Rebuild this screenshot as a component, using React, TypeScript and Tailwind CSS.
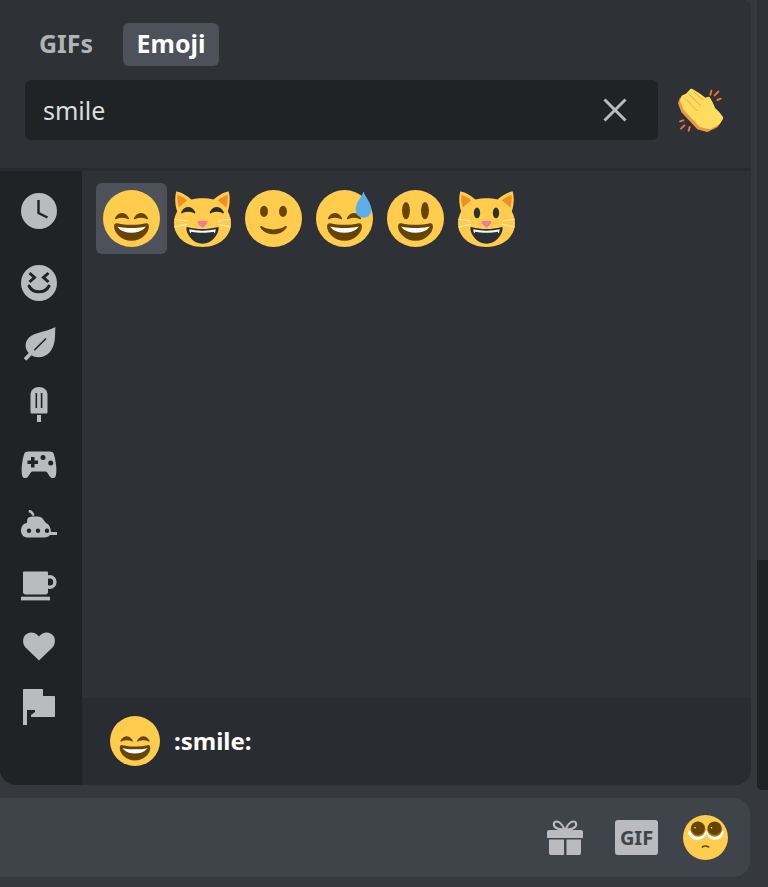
const SMILE_EYES = "M28.457 17.797c-.06-.135-1.499-3.297-4.457-3.297-2.957 0-4.397 3.162-4.457 3.297-.092.207-.032.449.145.591.175.142.426.147.61.014.012-.009 1.262-.902 3.702-.902 2.426 0 3.674.881 3.702.901.088.066.194.099.298.099.11 0 .221-.037.312-.109.177-.142.238-.386.145-.594zm-12 0c-.06-.135-1.499-3.297-4.457-3.297-2.957 0-4.397 3.162-4.457 3.297-.092.207-.032.449.144.591.176.142.427.147.61.014.013-.009 1.262-.902 3.703-.902 2.426 0 3.674.881 3.702.901.088.066.194.099.298.099.11 0 .221-.037.312-.109.178-.142.237-.386.145-.594z";
const EYE_L = "M16.457 17.797c-.06-.135-1.499-3.297-4.457-3.297-2.957 0-4.397 3.162-4.457 3.297-.092.207-.032.449.144.591.176.142.427.147.61.014.013-.009 1.262-.902 3.703-.902 2.426 0 3.674.881 3.702.901.088.066.194.099.298.099.11 0 .221-.037.312-.109.178-.142.237-.386.145-.594z";
const EYE_R = "M28.457 17.797c-.06-.135-1.499-3.297-4.457-3.297-2.957 0-4.397 3.162-4.457 3.297-.092.207-.032.449.145.591.175.142.426.147.61.014.012-.009 1.262-.902 3.702-.902 2.426 0 3.674.881 3.702.901.088.066.194.099.298.099.11 0 .221-.037.312-.109.177-.142.238-.386.145-.594z";
const MOUTH = "M18 22c-3.623 0-6.027-.422-9-1-.679-.131-2 0-2 2 0 4 4.595 9 11 9 6.404 0 11-5 11-9 0-2-1.321-2.132-2-2-2.973.578-5.377 1-9 1z";
const TEETH = "M9 23s3 1 9 1 9-1 9-1-2 4-9 4-9-4-9-4z";
const CAT = "M1.500.8C4 1.300 8 3.300 11 6c2-.5 4.500-.8 7-.8s5 .3 7 .8c3-2.700 7-4.700 9.500-5.200 1 3.200 1 8.200-.5 12.700 1.500 2.500 2 5 2 7.500 0 8-7 15-18 15S0 29 0 21c0-2.500.5-5 2-7.500C.5 9 .5 4 1.500.8z";
const HAND = "M40 6C55 14 70 24 82 34L92 30C98 40 104 52 108 62 118 70 126 80 132 90L122 106 94 120 67 113 20 63 10 38 14 26 27 20z";

function GrinSmile({ className }: { className: string }) {
  return (
    <svg viewBox="0 0 36 36" className={className}>
      <circle cx="18" cy="18" r="18" fill="#FFCC4D" />
      <path d={SMILE_EYES} fill="#664500" />
      <path d={MOUTH} fill="#664500" />
      <path d={TEETH} fill="#fff" />
    </svg>
  );
}

function CatBase({ children }: { children: React.ReactNode }) {
  return (
    <svg viewBox="0 0 36 36" className="w-[57px] h-[57px]">
      <path d={CAT} fill="#FFCC4D" />
      <path d="M2.200 3C4 3.600 6.500 5 8.300 6.500L3 11C2.200 8.500 1.900 5.500 2.200 3z" fill="#F18F26" />
      <path d="M33.800 3c-1.800.6-4.300 2-6.100 3.500L33 11c.8-2.500 1.100-5.500.8-8z" fill="#F18F26" />
      <path d="M15.700 19.600h4.600c.7 0 1 .7.7 1.200l-2.300 2.700c-.4.400-1 .4-1.400 0L15 20.800c-.3-.5 0-1.200.7-1.200z" fill="#F4779D" />
      <g stroke="#FFE8B6" strokeWidth=".7" fill="none" strokeLinecap="round">
        <path d="M.5 18.500l7.500 1" />
        <path d="M.5 23.300l7.500-1.600" />
        <path d="M35.500 18.500l-7.500 1" />
        <path d="M35.500 23.300l-7.500-1.600" />
      </g>
      <path d="M7.800 24.200c0-.6.400-.9 1-.7 3 .8 5.800 1.100 9.200 1.100s6.200-.3 9.200-1.100c.6-.2 1 .1 1 .7 0 3.800-4.200 9.800-10.200 9.800S7.800 28 7.800 24.200z" fill="#292F33" />
      <path d="M9.600 24.800c2.800.6 5.300.9 8.400.9s5.600-.3 8.400-.9c-.1 1-.3 1.800-.7 2.600-.2-.5-.4-.8-.7-1.100-2.200.5-4.400.7-7 .7s-4.800-.2-7-.7c-.3.300-.5.600-.7 1.100-.4-.8-.6-1.600-.7-2.600z" fill="#F5F8FA" />
      {children}
    </svg>
  );
}

function Clap() {
  return (
    <svg viewBox="0 0 135 135" className="w-[45px] h-[45px]">
      <g stroke="#F4702E" strokeWidth="6" strokeLinecap="round" fill="none">
        <path d="M97 20l3-12" />
        <path d="M110 22l11-11" />
        <path d="M118 36l10-4" />
        <path d="M6 100l10-3" />
        <path d="M9 122l10-10" />
        <path d="M32 128l3-11" />
      </g>
      <path d={HAND} transform="translate(-6 8)" fill="#EF9645" stroke="#EF9645" strokeWidth="8" strokeLinejoin="round" />
      <path d={HAND} fill="#FFDC5D" stroke="#FFDC5D" strokeWidth="8" strokeLinejoin="round" />
      <g stroke="#EF9645" strokeWidth="2.500" strokeLinecap="round" fill="none">
        <path d="M32 18l35 34" />
        <path d="M22 32l35 36" />
        <path d="M48 12l26 24" />
      </g>
    </svg>
  );
}

function Pleading() {
  return (
    <svg viewBox="0 0 36 36" className="w-[45px] h-[45px]">
      <circle cx="18" cy="18" r="18" fill="#FFCC4D" />
      <path d="M4 12.500C4 17 7.500 19.800 11.500 19.800S19 17 19 12.500z" fill="#fff" />
      <path d="M18.500 12.500C18.500 17 22 19.800 25.500 19.800S32.500 17 32.500 12.500z" fill="#fff" />
      <circle cx="12" cy="11.300" r="6" fill="#B5760F" />
      <circle cx="25.300" cy="11.300" r="6" fill="#B5760F" />
      <circle cx="12" cy="10.600" r="5.400" fill="#664500" />
      <circle cx="25.300" cy="10.600" r="5.400" fill="#664500" />
      <circle cx="9.600" cy="10.200" r=".6" fill="#fff" />
      <circle cx="22.800" cy="10.200" r=".6" fill="#fff" />
      <path d="M15.500 25.600c1.400-.9 3.600-.9 5 0" stroke="#664500" strokeWidth="1.200" strokeLinecap="round" fill="none" />
    </svg>
  );
}

const G = "#b9bbbe";
const D = "#202326";

function Clock() {
  return (
    <svg viewBox="0 0 36 36" className="w-9 h-9">
      <circle cx="18" cy="18" r="18" fill={G} />
      <path d="M17.500 7v13l9 4.500" stroke={D} strokeWidth="2.400" fill="none" />
    </svg>
  );
}
function Smiley() {
  return (
    <svg viewBox="0 0 36 36" className="w-9 h-9">
      <circle cx="18" cy="18" r="18" fill={G} />
      <path d="M8.500 8l5 4.500-5 4.500M27.500 8l-5 4.500 5 4.500" stroke={D} strokeWidth="3" fill="none" />
      <path d="M8 21c2 4 5.500 5.800 10 5.800s8-1.800 10-5.800" stroke={D} strokeWidth="3" fill="none" strokeLinecap="round" />
    </svg>
  );
}
function Leaf() {
  return (
    <svg viewBox="0 0 36 36" className="w-9 h-9">
      <path d="M34.500 1C33.500 6 36 19 28 27c-5 5-13 5.500-18 2C4 25 2.500 17 8 11.500 14 6 24 6.500 34.500 1z" fill={G} />
      <path d="M25 12.500L10.500 27" stroke={D} strokeWidth="1.600" />
      <path d="M13 24L4 33.500" stroke={G} strokeWidth="3.600" />
    </svg>
  );
}
function Popsicle() {
  return (
    <svg viewBox="0 0 36 36" className="w-9 h-9">
      <path d="M9.500 9C9.500 4 13 1 18 1s8.500 3 8.500 8v17c0 1-.6 1.500-1.500 1.500H11c-.9 0-1.500-.5-1.500-1.500z" fill={G} />
      <rect x="16" y="29" width="4" height="7" fill={G} />
      <rect x="14.500" y="7" width="1.600" height="15" fill={D} />
      <rect x="19.800" y="7" width="1.600" height="15" fill={D} />
    </svg>
  );
}
function Gamepad() {
  return (
    <svg viewBox="0 0 36 28" className="w-9 h-7">
      <path d="M4 1.500C5 .8 7 .5 9 .5h18c2 0 4 .3 5 1 1 .8 2.800 8.500 3.300 15 .3 4-.2 8-1 9.500-.7 1.200-3 1.500-4.500.5-1.500-1-3.300-6-5.300-6H11.500c-2 0-3.800 5-5.300 6-1.500 1-3.800.7-4.500-.5-.8-1.500-1.300-5.500-1-9.500C1.200 10 3 2.300 4 1.500z" fill={G} />
      <path d="M6.500 9.500H10V6h3.500v3.500H17V13h-3.500v3.500H10V13H6.500z" fill={D} />
      <circle cx="22" cy="6.500" r="2.500" fill={D} />
      <circle cx="29.700" cy="12" r="2.500" fill={D} />
    </svg>
  );
}
function Sub() {
  return (
    <svg viewBox="0 0 36 30" className="w-9 h-[30px]">
      <path d="M8 0c2.500 0 5 2 5.500 5.500l-2.300.3C10.700 3.800 9.500 2.700 7.500 2.200z" fill={G} />
      <path d="M7 8C8 7 10 6.500 13 6.500h2c3 0 5 .5 6 1.500 2 2 3 4 4 5 2.500.8 4.500 3.500 5 9h6v3h-7c-1 1.500-3 2.500-6 2.500H7c-4 0-7-2.500-7-7S3 13 6 13c0-2 0-3.800 1-5z" fill={G} />
      <circle cx="8" cy="20.700" r="2.200" fill={D} />
      <circle cx="17" cy="20.700" r="2.200" fill={D} />
      <circle cx="26" cy="20.700" r="2.200" fill={D} />
    </svg>
  );
}
function Cup() {
  return (
    <svg viewBox="0 0 36 30" className="w-9 h-[30px]">
      <path d="M2 1.500C2 .8 2.500.5 3.500.5h22c1 0 1.500.3 1.500 1V21c0 1.500-1 2.500-2.500 2.500h-20C3 23.500 2 22.500 2 21z" fill={G} />
      <circle cx="28.700" cy="11" r="5.200" fill="none" stroke={G} strokeWidth="3.400" />
      <rect x="0" y="25.700" width="29" height="3.700" fill={G} />
    </svg>
  );
}
function Heart() {
  return (
    <svg viewBox="0 0 36 30" className="w-9 h-[30px]">
      <path d="M18 29.500L4.500 16.500C1.500 13.500 1.500 8 3.500 5 6.500.8 13.500-.2 18 5.500 22.500-.2 29.500.8 32.500 5c2 3 2 8.500-1 11.500z" fill={G} />
    </svg>
  );
}
function Flag() {
  return (
    <svg viewBox="0 0 36 36" className="w-9 h-9">
      <path d="M2 1c0-.6.4-1 1-1h18c.6 0 1 .4 1 1v6h11c.6 0 1 .4 1 1v19c0 .6-.4 1-1 1H10l0-2 4-3 0-2H6v16H2z" fill={G} />
    </svg>
  );
}
function Gift() {
  return (
    <svg viewBox="0 0 36 36" className="w-9 h-9">
      <g fill="none" stroke={G} strokeWidth="2.200">
        <path d="M17.500 9.500C15.500 5 12.500 1.500 9.500 1.500c-2.500 0-3.500 3-2 5 1.500 2 5 3 10 3z" />
        <path d="M18.500 9.500C20.500 5 23.500 1.500 26.500 1.500c2.500 0 3.500 3 2 5-1.500 2-5 3-10 3z" />
      </g>
      <path d="M2 10h32c1 0 2 .8 2 2v6H0v-6c0-1.200 1-2 2-2z" fill={G} />
      <path d="M2 19.500h15V35H4c-1.200 0-2-.8-2-2zM19.500 19.500H34V33c0 1.200-.8 2-2 2H19.500z" fill={G} />
    </svg>
  );
}

function Cell({ children, active }: { children: React.ReactNode; active?: boolean }) {
  return (
    <div className={active ? "w-[71px] h-[71px] flex items-center justify-center rounded-[6px] bg-[#4d5159]" : "w-[71px] h-[71px] flex items-center justify-center rounded-[6px]"}>
      {children}
    </div>
  );
}

function Side({ children, first }: { children: React.ReactNode; first?: boolean }) {
  return <div className={first ? "h-[60px] mb-[12px] flex items-center justify-center pr-[4px]" : "h-[60.500px] flex items-center justify-center pr-[4px]"}>{children}</div>;
}

export default function App() {
  return (
    <div className="w-[768px] h-[887px] overflow-hidden flex bg-[#35393e] font-['Noto_Sans',sans-serif]">
      <div className="w-[751px] flex flex-col shrink-0">
        <div className="h-[785px] rounded-b-[16px] rounded-tr-[8px] overflow-hidden flex flex-col bg-[#2e3136] shrink-0">
          <div className="h-[171px] shrink-0 border-b-[3px] border-[#282b2f] px-[25px] pt-[23px]">
            <div className="flex items-center h-[43px]">
              <div className="w-[98px] pl-[14px] text-[25px] leading-[40px] pb-[3px] font-bold text-[#b1b4b7]">GIFs</div>
              <div className="w-[96px] h-[43px] rounded-[6px] bg-[#4d5159] flex items-center justify-center pb-[3px] text-[25px] leading-[40px] font-bold text-white">Emoji</div>
            </div>
            <div className="flex items-center mt-[14px]">
              <div className="w-[633px] h-[60px] rounded-[6px] bg-[#1f2326] flex items-center justify-between pl-[18px] pr-[31px]">
                <span className="text-[25px] leading-[40px] text-[#dcddde]">smile</span>
                <svg viewBox="0 0 24 24" className="w-6 h-6">
                  <path d="M1.500 1.500l21 21M22.500 1.500l-21 21" stroke="#b9bbbe" strokeWidth="3" fill="none" />
                </svg>
              </div>
              <div className="ml-[20px]"><Clap /></div>
            </div>
          </div>
          <div className="flex flex-1 min-h-0">
            <div className="w-[82px] shrink-0 bg-[#1f2326] pt-[10px] flex flex-col">
              <Side first><Clock /></Side>
              <Side><Smiley /></Side>
              <Side><Leaf /></Side>
              <Side><Popsicle /></Side>
              <Side><Gamepad /></Side>
              <Side><Sub /></Side>
              <Side><Cup /></Side>
              <Side><Heart /></Side>
              <Side><Flag /></Side>
            </div>
            <div className="flex-1 flex flex-col min-w-0">
              <div className="flex-1 pl-[14px] pt-[12px] flex items-start">
                <Cell active><GrinSmile className="w-[57px] h-[57px]" /></Cell>
                <Cell>
                  <CatBase>
                    <g transform="translate(-3 -3.700)"><path d={EYE_L} fill="#292F33" /></g>
                    <g transform="translate(3 -3.700)"><path d={EYE_R} fill="#292F33" /></g>
                  </CatBase>
                </Cell>
                <Cell>
                  <svg viewBox="0 0 36 36" className="w-[57px] h-[57px]">
                    <circle cx="18" cy="18" r="18" fill="#FFCC4D" />
                    <ellipse cx="12" cy="13.500" rx="2.500" ry="3.500" fill="#664500" />
                    <ellipse cx="24" cy="13.500" rx="2.500" ry="3.500" fill="#664500" />
                    <path d="M10.500 22.800c2 1.400 4.500 2.100 7.500 2.100s5.500-.7 7.500-2.100c.6-.4 1.200.2.800.9-1.500 2.600-4.800 4.300-8.300 4.300s-6.800-1.700-8.300-4.300c-.4-.7.200-1.300.8-.9z" fill="#664500" />
                  </svg>
                </Cell>
                <Cell>
                  <svg viewBox="0 0 36 36" className="w-[57px] h-[57px]">
                    <circle cx="18" cy="18" r="18" fill="#FFCC4D" />
                    <path d={SMILE_EYES} fill="#664500" />
                    <path d={MOUTH} fill="#664500" />
                    <path d={TEETH} fill="#fff" />
                    <path d="M30 1c1 3.500 5 7 5 11.500a5 5 0 0 1-10 0C25 8 29 4.500 30 1z" fill="#5DADEC" />
                  </svg>
                </Cell>
                <Cell>
                  <svg viewBox="0 0 36 36" className="w-[57px] h-[57px]">
                    <circle cx="18" cy="18" r="18" fill="#FFCC4D" />
                    <ellipse cx="12" cy="13" rx="2.500" ry="5.500" fill="#664500" />
                    <ellipse cx="24" cy="13" rx="2.500" ry="5.500" fill="#664500" />
                    <path d={MOUTH} fill="#664500" />
                    <path d={TEETH} fill="#fff" />
                  </svg>
                </Cell>
                <Cell>
                  <CatBase>
                    <ellipse cx="12" cy="14.500" rx="2" ry="3.400" fill="#292F33" />
                    <ellipse cx="24" cy="14.500" rx="2" ry="3.400" fill="#292F33" />
                  </CatBase>
                </Cell>
              </div>
              <div className="h-[87px] shrink-0 bg-[#292c30] flex items-center pl-[28px] pb-[2px]">
                <GrinSmile className="w-[50px] h-[50px]" />
                <span className="ml-[14px] text-[24px] leading-[32px] font-bold text-white">:smile:</span>
              </div>
            </div>
          </div>
        </div>
        <div className="mt-[13px] h-[79px] w-[750px] rounded-r-[16px] bg-[#3f444b] flex items-center justify-end shrink-0 pr-[22px]">
          <Gift />
          <div className="ml-[32px] w-[43px] h-[35px] rounded-[3px] bg-[#b9bbbe] flex items-center justify-center text-[20px] leading-none font-bold text-[#40444b]">GIF</div>
          <div className="ml-[25px]"><Pleading /></div>
        </div>
      </div>
      <div className="flex-1 pl-[6px]">
        <div className="h-[790px] bg-[#2e3136] rounded-b-[5px] flex flex-col justify-end">
          <div className="h-[230px] bg-[#202326] rounded-bl-[5px]" />
        </div>
      </div>
    </div>
  );
}
